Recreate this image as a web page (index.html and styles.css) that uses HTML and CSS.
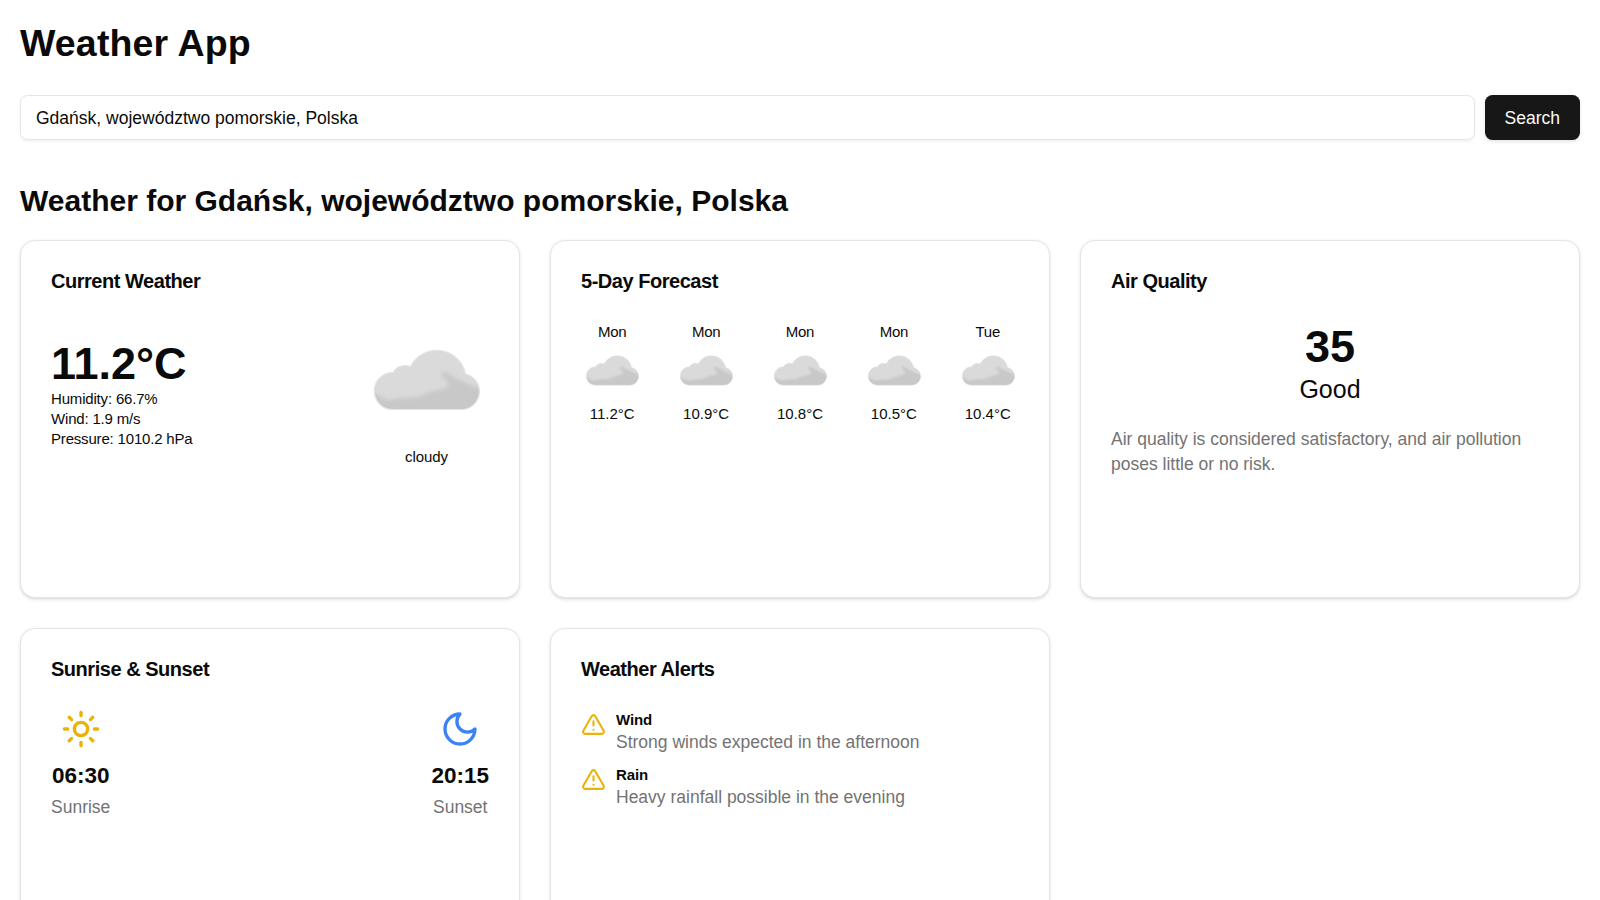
FILE: index.html
```html
<!DOCTYPE html>
<html lang="en">
<head>
<meta charset="utf-8">
<title>Weather App</title>
<link rel="stylesheet" href="styles.css">
</head>
<body>
<svg class="defs" width="0" height="0" aria-hidden="true">
  <defs>
    <filter id="soft" x="-20%" y="-20%" width="140%" height="140%"><feGaussianBlur stdDeviation="2"/></filter>
    <clipPath id="cloud-clip"><path d="M28 88.500A18.500 18.500 0 1 1 29.500 51.500C31.500 46 38.500 43 46.500 45.500A29.300 29.300 0 0 1 101.500 53A18 18 0 0 1 98.500 88.500Z"/></clipPath>
    <symbol id="cloud" viewBox="0 0 125 125">
      <g clip-path="url(#cloud-clip)">
        <rect width="125" height="125" fill="#dadada"/>
        <path filter="url(#soft)" fill="#c8c8c8" d="M0 70c12-1 16 9 27 9 12-4 22 0 33-5 5-3 8-4 15-5 7-2 11-4 9-8-3-4-8-6-6-10 6-1 10 5 18 8 7 4 12 8 29 8v35H0z"/>
      </g>
      <path fill="none" stroke="#e4e4e4" stroke-width="1.2" d="M28 88.500A18.500 18.500 0 1 1 29.500 51.500C31.500 46 38.500 43 46.500 45.500A29.300 29.300 0 0 1 101.500 53A18 18 0 0 1 98.500 88.500Z"/>
    </symbol>
    <symbol id="alert" viewBox="0 0 24 24">
      <path d="m21.730 18-8-14a2 2 0 0 0-3.480 0l-8 14A2 2 0 0 0 4 21h16a2 2 0 0 0 1.730-3"/><path d="M12 9v4"/><path d="M12 17h.01"/>
    </symbol>
  </defs>
</svg>
<main class="page">
  <h1 class="app-title">Weather App</h1>
  <form class="search">
    <input class="search-input" type="text" value="Gdańsk, województwo pomorskie, Polska">
    <button class="search-button" type="button">Search</button>
  </form>
  <h2 class="location">Weather for Gdańsk, województwo pomorskie, Polska</h2>
  <div class="grid">
    <section class="card">
      <h3 class="card-title">Current Weather</h3>
      <div class="current">
        <div class="readings">
          <p class="big">11.2°C</p>
          <p>Humidity: 66.7%</p>
          <p>Wind: 1.9 m/s</p>
          <p>Pressure: 1010.2 hPa</p>
        </div>
        <div class="condition">
          <svg class="cloud-large"><use href="#cloud"/></svg>
          <p class="condition-name">cloudy</p>
        </div>
      </div>
    </section>
    <section class="card">
      <h3 class="card-title">5-Day Forecast</h3>
      <div class="forecast">
        <div class="day"><p class="day-name">Mon</p><svg class="cloud-small"><use href="#cloud"/></svg><p>11.2°C</p></div>
        <div class="day"><p class="day-name">Mon</p><svg class="cloud-small"><use href="#cloud"/></svg><p>10.9°C</p></div>
        <div class="day"><p class="day-name">Mon</p><svg class="cloud-small"><use href="#cloud"/></svg><p>10.8°C</p></div>
        <div class="day"><p class="day-name">Mon</p><svg class="cloud-small"><use href="#cloud"/></svg><p>10.5°C</p></div>
        <div class="day"><p class="day-name">Tue</p><svg class="cloud-small"><use href="#cloud"/></svg><p>10.4°C</p></div>
      </div>
    </section>
    <section class="card">
      <h3 class="card-title">Air Quality</h3>
      <div class="air">
        <p class="big">35</p>
        <p class="level">Good</p>
      </div>
      <p class="muted air-note">Air quality is considered satisfactory, and air pollution poses little or no risk.</p>
    </section>
    <section class="card">
      <h3 class="card-title">Sunrise &amp; Sunset</h3>
      <div class="sun">
        <div class="sun-item">
          <svg class="sun-icon sun-up" viewBox="0 0 24 24"><circle cx="12" cy="12" r="4"/><path d="M12 2v2"/><path d="M12 20v2"/><path d="m4.930 4.930 1.410 1.410"/><path d="m17.660 17.660 1.410 1.410"/><path d="M2 12h2"/><path d="M20 12h2"/><path d="m6.340 17.660-1.410 1.410"/><path d="m19.070 4.930-1.410 1.410"/></svg>
          <p class="time">06:30</p>
          <p class="muted">Sunrise</p>
        </div>
        <div class="sun-item">
          <svg class="sun-icon sun-down" viewBox="0 0 24 24"><path d="M12 3a6 6 0 0 0 9 9 9 9 0 1 1-9-9Z"/></svg>
          <p class="time">20:15</p>
          <p class="muted">Sunset</p>
        </div>
      </div>
    </section>
    <section class="card">
      <h3 class="card-title">Weather Alerts</h3>
      <div class="alerts">
        <div class="alert">
          <svg class="alert-icon"><use href="#alert"/></svg>
          <div class="alert-text"><p class="alert-name">Wind</p><p class="muted">Strong winds expected in the afternoon</p></div>
        </div>
        <div class="alert">
          <svg class="alert-icon"><use href="#alert"/></svg>
          <div class="alert-text"><p class="alert-name">Rain</p><p class="muted">Heavy rainfall possible in the evening</p></div>
        </div>
      </div>
    </section>
  </div>
</main>
</body>
</html>
```
FILE: styles.css
```css
*, *::before, *::after { box-sizing: border-box; }
html { overflow: hidden; height: 100%; }
body {
  margin: 0;
  height: 100%;
  overflow: hidden;
  background: #fff;
  color: #0a0a0a;
  font-family: "Liberation Sans", Arial, Helvetica, sans-serif;
  font-size: 15px;
  line-height: 20px;
}
h1, h2, h3, p { margin: 0; }
svg { display: block; flex-shrink: 0; }
.defs { position: absolute; }
.page { height: 100%; overflow: hidden; padding: 20px 20px 0; }
.app-title { font-size: 37.5px; line-height: 45px; letter-spacing: .15px; padding-top: 1px; margin-bottom: 29px; }
.search { display: flex; gap: 10px; margin-bottom: 40px; }
.search-input {
  flex: 1;
  height: 45px;
  padding: 6px 15px 4px;
  border: 1px solid #e5e5e5;
  border-radius: 7.5px;
  background: transparent;
  color: inherit;
  font: 17.5px/25px "Liberation Sans", Arial, sans-serif;
  box-shadow: 0 1.25px 2.5px rgba(0, 0, 0, .05);
  outline: none;
}
.search-button {
  height: 45px;
  padding: 2px 20px 0;
  border: 0;
  border-radius: 7.5px;
  background: #171717;
  color: #fafafa;
  font: 17.5px/25px "Liberation Sans", Arial, sans-serif;
  box-shadow: 0 1.25px 3.75px rgba(0, 0, 0, .1);
}
.location { font-size: 30px; line-height: 40px; padding-top: 1px; margin-bottom: 19px; }
.grid {
  display: grid;
  grid-template-columns: repeat(3, 1fr);
  grid-auto-rows: 358px;
  gap: 30px;
}
.card {
  padding: 30px;
  border: 1px solid #e5e5e5;
  border-radius: 15px;
  background: #fff;
  box-shadow: 0 1.25px 3.75px rgba(0, 0, 0, .1), 0 1.25px 2.5px -1.25px rgba(0, 0, 0, .1);
}
.card-title { font-size: 20px; line-height: 20px; letter-spacing: -.47px; margin-bottom: 30px; }
.current { display: flex; justify-content: space-between; align-items: center; }
.big { font-size: 45px; line-height: 50px; font-weight: 700; letter-spacing: 0; }
.readings { letter-spacing: -.18px; }
.condition, .day, .sun-item, .air { display: flex; flex-direction: column; align-items: center; }
.cloud-large { width: 125px; height: 125px; }
.cloud-small { width: 62.5px; height: 62.5px; }
.condition-name { padding-top: 1px; height: 20px; letter-spacing: -.1px; }
.day-name { padding-top: 1px; height: 20px; letter-spacing: -.3px; }
.forecast, .sun { display: flex; justify-content: space-between; }
.air { padding-top: 1px; }
.level { font-size: 25px; line-height: 35px; }
.muted { font-size: 17.5px; line-height: 25px; color: #737373; }
.air-note { margin-top: 20px; }
.sun-icon, .alert-icon { fill: none; stroke-width: 2; stroke-linecap: round; stroke-linejoin: round; }
.sun-icon { width: 40px; height: 40px; margin-bottom: 9px; }
.sun-up, .alert-icon { stroke: #eab308; }
.sun-down { stroke: #3b82f6; }
.time { font-size: 22.5px; line-height: 35px; font-weight: 700; margin-bottom: 2px; }
.alerts { display: flex; flex-direction: column; gap: 10px; }
.alert { display: flex; gap: 10px; height: 45px; }
.alert-text { padding-top: 1px; }
.alert-icon { width: 25px; height: 25px; margin-top: 2.5px; }
.alert-name { font-weight: 700; letter-spacing: -.1px; }
```
